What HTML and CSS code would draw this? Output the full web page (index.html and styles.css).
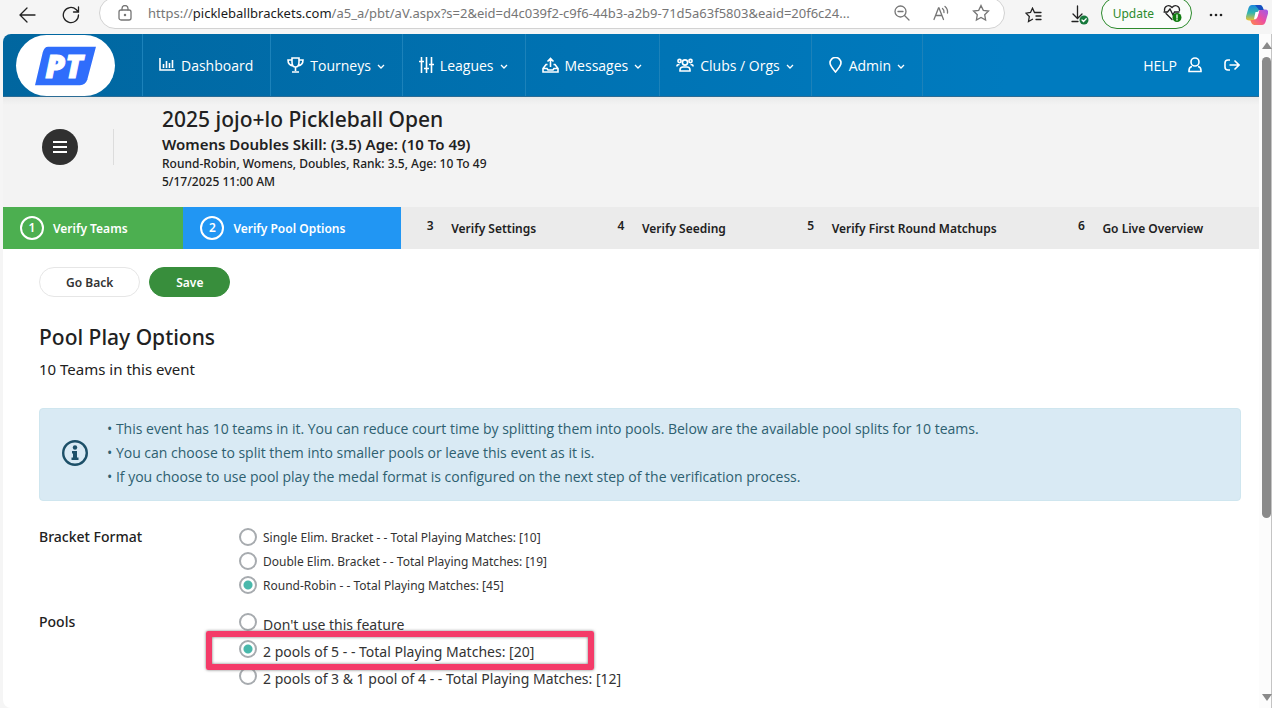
FILE: index.html
```
<!DOCTYPE html>
<html lang="en">
<head>
    <meta charset="UTF-8">
    <meta name="viewport" content="width=device-width, initial-scale=1.0">
    <title>Pool Play Options</title>
    <link rel="stylesheet" href="styles.css">
</head>
<body>
    <div class="toolbar">
        <button type="button" class="tool back" aria-label="Back">
            <svg width="18" height="18" viewBox="0 0 18 18"><path d="M17 9H2M9 2L2 9l7 7"/></svg>
        </button>
        <button type="button" class="tool reload" aria-label="Reload">
            <svg width="18" height="18" viewBox="0 0 18 18"><path d="M16.5 9a7.6 7.6 0 1 1-2.4-5.5L16.3 5.700M16.500 1v5h-5"/></svg>
        </button>
        <div class="address">
            <svg class="lock" width="14" height="16" viewBox="0 0 14 16"><rect x="1" y="5" width="12" height="10" rx="2"/><path d="M4 5V3.500a3 3 0 0 1 6 0V5"/><circle cx="7" cy="10" r=".6"/></svg>
            <div class="url">https://<span class="host">pickleballbrackets.com</span>/a5_a/pbt/aV.aspx?s=2&amp;eid=d4c039f2-c9f6-44b3-a2b9-71d5a63f5803&amp;eaid=20f6c24...</div>
            <button type="button" class="tool" aria-label="Zoom out">
                <svg width="16" height="16" viewBox="0 0 16 16"><circle cx="6.500" cy="6.500" r="5.500"/><path d="M4 6.500h5M10.500 10.500L15 15"/></svg>
            </button>
            <button type="button" class="tool" aria-label="Read aloud">
                <svg width="16" height="16" viewBox="0 0 16 16"><path d="M1 14.500L5.500 3h.5l4.500 11.500M2.600 10.500h6.300M9.500 3.500q1.800 1.500 1.500 4M12 1.500q3 2.500 2.500 6.500"/></svg>
            </button>
            <button type="button" class="tool" aria-label="Add to favorites">
                <svg width="18" height="18" viewBox="0 0 18 18"><path d="M9 1.500l2.300 4.800 5.200.7-3.800 3.700.9 5.300L9 13.500 4.400 16l.9-5.300L1.500 7l5.200-.7z"/></svg>
            </button>
        </div>
        <button type="button" class="tool favorites" aria-label="Favorites">
            <svg width="17" height="16" viewBox="0 0 17 16"><path d="M11 5.500H9.500L7.500 1.200 5.500 5.500l-4.500.7 3.300 3.300-.8 5 4-2.200M11 5.500h5M11 9h5M11 12.500h5"/></svg>
        </button>
        <button type="button" class="tool downloads" aria-label="Downloads">
            <svg width="18" height="20" viewBox="0 0 18 20"><path d="M6.500 1v12M2 9l4.500 4.500L11 9M1 16.500h6"/><circle cx="13" cy="15" r="4.500" fill="#16793c" stroke="none"/><path d="M11 15l1.500 1.500 2.700-2.700" stroke="#fff"/></svg>
        </button>
        <button type="button" class="update">
            Update
            <svg width="20" height="20" viewBox="0 0 20 20"><path d="M9 16.500L3 10.500M1.500 7.500C1 3 6 1 9 4.500c3-3.500 8-1.500 7.500 3M1 9h3.500l2.500-3 3 6 1.500-3H16"/><circle cx="14" cy="14.500" r="4.500" fill="#107c10" stroke="none"/><path d="M14 12v3M14 16.500v.6" stroke="#fff"/></svg>
        </button>
        <button type="button" class="tool more" aria-label="More">
            <svg width="16" height="4" viewBox="0 0 16 4"><circle cx="3" cy="2" r="1.300"/><circle cx="8" cy="2" r="1.300"/><circle cx="13" cy="2" r="1.300"/></svg>
        </button>
        <button type="button" class="tool copilot" aria-label="Copilot">
            <svg width="22" height="20" viewBox="0 0 22 20">
                <defs>
                    <linearGradient id="cool" x1="0" y1="0" x2="0" y2="1"><stop offset="0" stop-color="#1a88dd"/><stop offset=".5" stop-color="#32b5b0"/><stop offset="1" stop-color="#f0c330"/></linearGradient>
                    <linearGradient id="warm" x1="0" y1="1" x2="1" y2="0"><stop offset="0" stop-color="#ff8a48"/><stop offset=".5" stop-color="#ed4ea0"/><stop offset="1" stop-color="#9a5cf0"/></linearGradient>
                </defs>
                <path d="M6 0h8q2 0 3 3l.6 2H14q-2 0-3 3L9 14q-.6 1.500-2 1.500H3q-4 0-3-4L2.500 3Q3.500 0 6 0z" fill="url(#cool)"/>
                <path d="M16 20H8q-2 0-3-3l-.6-2H8q2 0 3-3l2-6q.6-1.500 2-1.500h4q4 0 3 4L19.500 17q-1 3-3.500 3z" fill="url(#warm)"/>
                <path d="M9 0h5q2 0 3 3l.6 2H14q-1.500 0-2-1.500z" fill="#174fc0"/>
                <path d="M9.500 7h3.500l-1.500 5q-.6 2-2.500 2H8z" fill="#fff"/>
            </svg>
        </button>
    </div>

    <div class="window">
        <div class="page">
            <nav class="navbar">
                <a href="#" class="logo" aria-label="Home">
                    <svg width="64" height="42" viewBox="0 0 64 42"><path d="M14 1h49l-9 34q-2 6-8 6H0L8 7q2-6 6-6z" fill="#2f6dfb"/><text x="30" y="33" text-anchor="middle">PT</text></svg>
                </a>
                <a href="#" class="nav-item">
                    <svg width="16" height="14" viewBox="0 0 16 14"><path d="M1 0v12h15M4.500 10V6M7.500 10V3M10.500 10V5M13.500 10V2"/></svg>
                    Dashboard
                </a>
                <a href="#" class="nav-item">
                    <svg width="17" height="16" viewBox="0 0 17 16"><path d="M5 1h7v4q0 5-3.500 5T5 5zM5 3H1q0 5 5 6M12 3h4q0 5-5 6M8.500 10v4M5 15h7"/></svg>
                    Tourneys
                    <svg class="chevron" width="8" height="6" viewBox="0 0 8 6"><path d="M1 1l3 3 3-3"/></svg>
                </a>
                <a href="#" class="nav-item">
                    <svg width="15" height="16" viewBox="0 0 15 16"><path d="M2.500 0v16M7.500 0v16M12.500 0v16M0 4.500h5M5 11.500h5M10 7.500h5"/></svg>
                    Leagues
                    <svg class="chevron" width="8" height="6" viewBox="0 0 8 6"><path d="M1 1l3 3 3-3"/></svg>
                </a>
                <a href="#" class="nav-item">
                    <svg width="17" height="16" viewBox="0 0 17 16"><path d="M5.500 7.500H4L1 11.500V15h15v-3.500L13 7.500h-1.500M1 11.500h4l1 1.500h5l1-1.500h4M8.500 10V1.500M5.500 4.500l3-3 3 3"/></svg>
                    Messages
                    <svg class="chevron" width="8" height="6" viewBox="0 0 8 6"><path d="M1 1l3 3 3-3"/></svg>
                </a>
                <a href="#" class="nav-item">
                    <svg width="18" height="14" viewBox="0 0 18 14"><circle cx="9" cy="4.500" r="2.600"/><path d="M4 13v-1q0-3 3-3h4q3 0 3 3v1zM1 8.500V8q0-1.500 2.500-1.500M17 8.500V8q0-1.500-2.500-1.500"/><circle cx="3.500" cy="3" r="1.600"/><circle cx="14.500" cy="3" r="1.600"/></svg>
                    Clubs / Orgs
                    <svg class="chevron" width="8" height="6" viewBox="0 0 8 6"><path d="M1 1l3 3 3-3"/></svg>
                </a>
                <a href="#" class="nav-item">
                    <svg width="15" height="16" viewBox="0 0 15 16"><path d="M7.500 15Q2 8.500 2 6a5.500 5.500 0 0 1 11 0q0 2.500-5.500 9z"/></svg>
                    Admin
                    <svg class="chevron" width="8" height="6" viewBox="0 0 8 6"><path d="M1 1l3 3 3-3"/></svg>
                </a>
                <div class="account">
                    <a href="#">HELP
                        <svg width="14" height="16" viewBox="0 0 14 16"><circle cx="7" cy="5" r="4"/><path d="M4 9.500q-3 .5-3 4V14.500h12v-1q0-3.500-3-4"/></svg>
                    </a>
                    <a href="#" aria-label="Log out">
                        <svg width="16" height="12" viewBox="0 0 16 12"><path d="M6 1H4Q1 1 1 4v4q0 3 3 3h2M5.500 6H15M10.500 1.500L15 6l-4.500 4.500"/></svg>
                    </a>
                </div>
            </nav>

            <header class="event-header">
                <div class="menu-box">
                    <button type="button" class="menu-button" aria-label="Menu">
                        <svg width="16" height="14" viewBox="0 0 16 14"><path d="M1 2h14M1 7h14M1 12h14"/></svg>
                    </button>
                </div>
                <div class="event-info">
                    <h1>2025 jojo+lo Pickleball Open</h1>
                    <h2>Womens Doubles Skill: (3.5) Age: (10 To 49)</h2>
                    <p>Round-Robin, Womens, Doubles, Rank: 3.5, Age: 10 To 49</p>
                    <p>5/17/2025 11:00 AM</p>
                </div>
            </header>

            <div class="steps">
                <a href="#" class="step done"><span class="number">1</span>Verify Teams</a>
                <a href="#" class="step active"><span class="number">2</span>Verify Pool Options</a>
                <a href="#" class="step"><span class="number">3</span>Verify Settings</a>
                <a href="#" class="step"><span class="number">4</span>Verify Seeding</a>
                <a href="#" class="step"><span class="number">5</span>Verify First Round Matchups</a>
                <a href="#" class="step"><span class="number">6</span>Go Live Overview</a>
            </div>

            <main class="content">
                <div class="actions">
                    <button type="button" class="btn">Go Back</button>
                    <button type="button" class="btn btn-save">Save</button>
                </div>
                <h3>Pool Play Options</h3>
                <p class="team-count">10 Teams in this event</p>

                <div class="info-box">
                    <svg width="26" height="26" viewBox="0 0 26 26"><circle cx="13" cy="13" r="11.800" fill="none" stroke="#1d5068" stroke-width="2.400"/><circle cx="13" cy="7.500" r="2.200"/><path d="M10 11h5v6.500h1.500V20H9.500v-2.500H11v-4h-1z"/></svg>
                    <div class="info-text">
                        <p>• This event has 10 teams in it. You can reduce court time by splitting them into pools. Below are the available pool splits for 10 teams.</p>
                        <p>• You can choose to split them into smaller pools or leave this event as it is.</p>
                        <p>• If you choose to use pool play the medal format is configured on the next step of the verification process.</p>
                    </div>
                </div>

                <form>
                    <fieldset class="form-row">
                        <legend>Bracket Format</legend>
                        <div class="options">
                            <label><input type="radio" name="format">Single Elim. Bracket - - Total Playing Matches: [10]</label>
                            <label><input type="radio" name="format">Double Elim. Bracket - - Total Playing Matches: [19]</label>
                            <label><input type="radio" name="format" checked>Round-Robin - - Total Playing Matches: [45]</label>
                        </div>
                    </fieldset>
                    <fieldset class="form-row">
                        <legend>Pools</legend>
                        <div class="options pools">
                            <label><input type="radio" name="pools">Don't use this feature</label>
                            <label class="marked"><input type="radio" name="pools" checked>2 pools of 5 - - Total Playing Matches: [20]</label>
                            <label><input type="radio" name="pools">2 pools of 3 &amp; 1 pool of 4 - - Total Playing Matches: [12]</label>
                        </div>
                    </fieldset>
                </form>
            </main>
        </div>
        <div class="scrollbar">
            <span class="arrow-up"></span>
            <span class="thumb"></span>
            <span class="arrow-down"></span>
        </div>
    </div>
</body>
</html>
```
FILE: styles.css
```
*, *::after {
    box-sizing: border-box;
}
body {
    margin: 0;
    height: 100vh;
    overflow: hidden;
    display: flex;
    flex-direction: column;
    background-color: #f5f5f5;
    color: #212121;
    font-family: "Noto Sans", "Open Sans", sans-serif;
    font-size: 14px;
}
h1, h2, h3, p {
    margin: 0;
    font-weight: 500;
}
a {
    color: inherit;
    text-decoration: none;
}
button {
    font-family: inherit;
    cursor: pointer;
}
svg {
    display: block;
    flex: none;
}

/* browser toolbar */
.toolbar {
    display: flex;
    align-items: center;
    height: 29px;
    padding: 0 4px 0 18px;
    flex: none;
}
.tool {
    padding: 0;
    border: none;
    background: none;
    flex: none;
}
.tool svg, .lock, .update svg {
    fill: none;
    stroke: #222;
    stroke-width: 1.3;
    stroke-linecap: round;
}
.reload {
    margin: 0 19px 0 26px;
}
.address {
    flex: 1;
    display: flex;
    align-items: center;
    gap: 23px;
    min-width: 0;
    height: 32px;
    padding: 0 14px 0 18px;
    background-color: #fff;
    border: 1px solid #d2d2d2;
    border-radius: 16px;
    align-self: flex-end;
}
.address svg {
    stroke: #767676;
}
.address .lock {
    margin-right: -7px;
}
.url {
    flex: 1;
    min-width: 0;
    white-space: nowrap;
    color: #767676;
    font-size: 13px;
}
.host {
    color: #1b1b1b;
}
.favorites {
    margin: 0 29px 0 20px;
}
.downloads {
    margin-right: 12px;
}
.update {
    display: flex;
    align-items: center;
    gap: 9px;
    height: 32px;
    align-self: flex-end;
    padding: 0 8px 0 11px;
    border: 1px solid #2c8a2c;
    border-radius: 16px;
    background-color: #fafcfa;
    color: #2c8a2c;
    font-size: 12px;
}
.more {
    margin: 0 22px 0 16px;
}
.more svg {
    fill: #222;
    stroke: none;
}
.copilot svg {
    stroke: none;
}

/* page frame */
.window {
    flex: 1;
    display: flex;
    min-height: 0;
    margin-top: 5px;
    padding-left: 3px;
}
.page {
    flex: 1;
    min-width: 0;
    overflow: hidden;
    background-color: #fff;
    border-radius: 8px 0 0 8px;
}
.scrollbar {
    width: 13px;
    display: flex;
    flex-direction: column;
    align-items: center;
    padding: 8px 0 7px 3px;
    background-color: #fcfcfc;
    border-right: 1px solid #c4c4c4;
}
.arrow-up, .arrow-down {
    border: 5px solid transparent;
    border-top-width: 0;
    border-bottom: 7px solid #8a8a8a;
}
.arrow-down {
    margin-top: auto;
    transform: rotate(180deg);
}
.thumb {
    width: 9px;
    height: 70%;
    margin-top: 8px;
    border-radius: 5px;
    background-color: #8a8a8a;
}

/* navbar */
.navbar {
    display: flex;
    height: 63px;
    color: #fff;
    font-family: "Open Sans", "Noto Sans", sans-serif;
    font-size: 14px;
    background: linear-gradient(to right, #01669f, #0072b2 45%, #007bbf 80%);
    border-bottom: 1px solid #2b6c95;
}
.navbar svg {
    fill: none;
    stroke: #fff;
    stroke-width: 1.6;
}
.logo {
    display: flex;
    align-items: center;
    justify-content: center;
    width: 99px;
    height: 61px;
    margin: 1px 27px 0 13px;
    border-radius: 31px;
    background-color: #fff;
}
.logo text {
    fill: #fff;
    stroke: #fff;
    stroke-width: 1;
    font-size: 32px;
    font-weight: 800;
    font-style: italic;
}
.nav-item {
    display: flex;
    align-items: center;
    gap: 6px;
    padding: 0 17px 0 16px;
    border-left: 1px solid #1c82ba;
    white-space: nowrap;
}
.nav-item:nth-last-child(2) {
    border-right: 1px solid #1c82ba;
}
.navbar .chevron {
    stroke-width: 1.3;
    margin-top: 3px;
}
.account {
    display: flex;
    align-items: center;
    gap: 22px;
    margin-left: auto;
    padding-right: 19px;
}
.account a {
    display: flex;
    align-items: center;
    gap: 11px;
}

/* event header */
.event-header {
    display: flex;
    height: 110px;
    padding: 8px 0 0 39px;
    background: linear-gradient(#e9eaea, #f3f3f3 8px);
}
.menu-box {
    width: 72px;
    height: 36px;
    margin: 24px 48px 0 0;
    border-right: 1px solid #dcdcdc;
}
.menu-button {
    display: flex;
    align-items: center;
    justify-content: center;
    width: 36px;
    height: 36px;
    padding: 0;
    border: none;
    border-radius: 50%;
    background-color: #303030;
}
.menu-button svg {
    stroke: #fff;
    stroke-width: 2;
}
.event-info h1 {
    font-size: 21px;
    line-height: 28px;
}
.event-info h2 {
    font-size: 15px;
    font-weight: 600;
    line-height: 22px;
}
.event-info p {
    font-size: 12px;
    line-height: 18px;
}

/* steps */
.steps {
    display: flex;
    background-color: #ebebeb;
}
.step {
    flex: 1 1 auto;
    display: flex;
    align-items: center;
    gap: 9px;
    height: 42px;
    padding-left: 17px;
    font-size: 12px;
    font-weight: 600;
    white-space: nowrap;
}
.number {
    width: 24px;
    height: 24px;
    line-height: 20px;
    text-align: center;
}
.done, .active {
    color: #fff;
}
.done {
    background-color: #4caf50;
}
.active {
    background-color: #2196f3;
}
.done .number, .active .number {
    border: 2px solid #fff;
    border-radius: 50%;
}

/* content */
.content {
    padding: 18px 18px 0 36px;
}
.actions {
    display: flex;
    gap: 9px;
}
.btn {
    height: 30px;
    padding: 0 26px;
    border: 1px solid #e6e6e6;
    border-radius: 15px;
    background-color: #fff;
    color: #333;
    font-size: 12px;
    font-weight: 600;
}
.btn-save {
    border-color: #388e3c;
    background-color: #388e3c;
    color: #fff;
}
h3 {
    margin-top: 24px;
    font-size: 21px;
    line-height: 32px;
}
.team-count {
    margin-top: 4px;
    font-size: 15px;
    font-weight: 400;
    line-height: 24px;
}
.info-box {
    display: flex;
    align-items: center;
    gap: 19px;
    margin: 27px 0 24px;
    padding: 8px 24px 11px 22px;
    border: 1px solid #cfe6ef;
    border-radius: 4px;
    background-color: #d9eaf4;
}
.info-box svg {
    fill: #1d5068;
}
.info-text p {
    color: #2d6070;
    font-family: "Open Sans", "Noto Sans", sans-serif;
    font-size: 14px;
    font-weight: 400;
    line-height: 24px;
}
.form-row {
    display: flex;
    margin: 0 0 13px;
    padding: 0;
    border: none;
}
.form-row legend {
    float: left;
    width: 200px;
    padding: 0;
    font-size: 14px;
    font-weight: 500;
    line-height: 24px;
}
.options label {
    display: flex;
    align-items: center;
    gap: 6px;
    height: 24px;
    font-size: 12px;
    color: #333;
}
.options input {
    appearance: none;
    width: 18px;
    height: 18px;
    margin: 0;
    border: 2px solid #a7abaf;
    border-radius: 50%;
    background-color: #fff;
}
.options input:checked {
    background: radial-gradient(circle, #49b8ab 4px, #fff 5px);
}
.pools label {
    align-items: flex-start;
    height: 27px;
    padding-top: 3px;
    font-size: 14px;
    line-height: 24px;
}
.marked {
    position: relative;
}
.marked::after {
    content: "";
    position: absolute;
    left: -33px;
    top: -6px;
    width: 388px;
    height: 39px;
    border: 6px solid #f43b69;
    border-radius: 2px;
    box-shadow: 0 0 3px #777, inset 0 0 3px #777;
    pointer-events: none;
}
```
